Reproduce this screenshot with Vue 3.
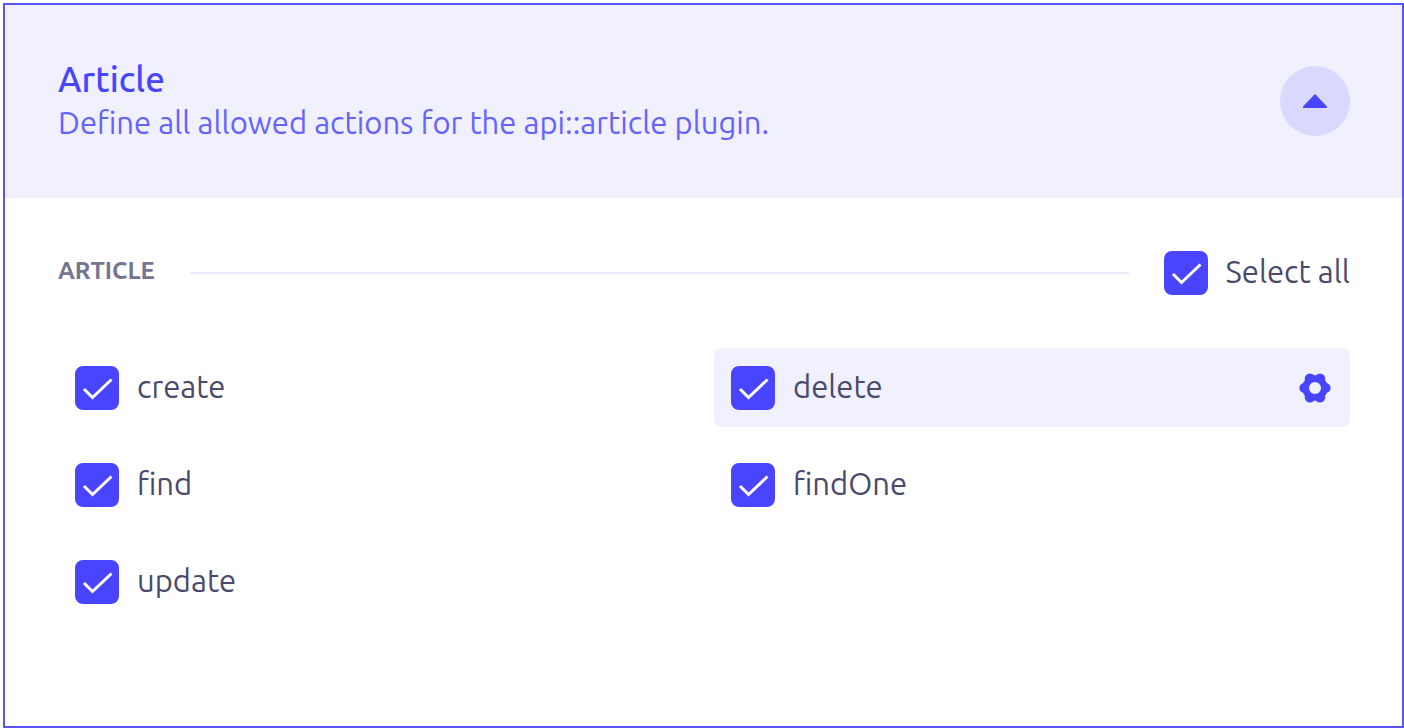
<script setup>
import { ref, computed } from 'vue'

const open = ref(true)
const actions = ref([
  { name: 'create', enabled: true },
  { name: 'delete', enabled: true },
  { name: 'find', enabled: true },
  { name: 'findOne', enabled: true },
  { name: 'update', enabled: true },
])
const active = ref('delete')

const allSelected = computed({
  get: () => actions.value.every((a) => a.enabled),
  set: (value) => actions.value.forEach((a) => (a.enabled = value)),
})
</script>

<template>
  <main class="page">
    <section class="accordion">
      <header class="head">
        <div class="titles">
          <h2 class="title">Article</h2>
          <p class="description">Define all allowed actions for the api::article plugin.</p>
        </div>
        <button class="toggle" type="button" aria-label="Toggle Article" :aria-expanded="open" @click="open = !open">
          <svg width="24" height="14" viewBox="0 0 24 14" aria-hidden="true">
            <path d="M12 0 24 12.500V14H0v-1.500z" fill="#4945ff" />
          </svg>
        </button>
      </header>

      <div v-if="open" class="body">
        <div class="group">
          <h3 class="group-name">ARTICLE</h3>
          <span class="rule"></span>
          <label class="choice">
            <span class="box">
              <input v-model="allSelected" type="checkbox" />
              <svg class="tick" viewBox="0 0 44 44" aria-hidden="true">
                <path d="M9 23 17.500 31.500 36.500 13.500" />
              </svg>
            </span>
            <span class="name">Select all</span>
          </label>
        </div>

        <div class="grid">
          <div v-for="action in actions" :key="action.name" class="cell" :class="{ active: action.name === active }">
            <label class="choice">
              <span class="box">
                <input v-model="action.enabled" type="checkbox" />
                <svg class="tick" viewBox="0 0 44 44" aria-hidden="true">
                  <path d="M9 23 17.500 31.500 36.500 13.500" />
                </svg>
              </span>
              <span class="name">{{ action.name }}</span>
            </label>
            <button v-if="action.name === active" class="settings" type="button" aria-label="Show bound route">
              <svg width="32" height="32" viewBox="0 0 32 32" aria-hidden="true">
                <g fill="#4945ff">
                  <circle cx="16" cy="16" r="12.800" />
                  <circle cx="5.400" cy="16" r="5" />
                  <circle cx="26.600" cy="16" r="5" />
                  <circle cx="11" cy="6.800" r="5.300" />
                  <circle cx="21" cy="6.800" r="5.300" />
                  <circle cx="11" cy="25.200" r="5.300" />
                  <circle cx="21" cy="25.200" r="5.300" />
                </g>
                <circle cx="16" cy="16" r="6" fill="#f0f0ff" />
              </svg>
            </button>
          </div>
        </div>
      </div>
    </section>
  </main>
</template>

<style>
body {
  margin: 0;
  background: #fff;
}
</style>

<style scoped>
.page {
  box-sizing: border-box;
  min-height: 100vh;
  padding: 3px 0 0 3px;
  display: flex;
  font-family: Ubuntu, "Noto Sans", "Open Sans", sans-serif;
  font-size: 31px;
  line-height: 44px;
  color: #4a4a6a;
}
.accordion {
  flex: 1;
  border: 2px solid #5a56f5;
}
.head {
  display: flex;
  align-items: center;
  justify-content: space-between;
  padding: 52px 52px 53px 53px;
  background: #f0f0ff;
}
.title,
.description {
  margin: 0;
  color: #4945ff;
  font-weight: 400;
}
.title {
  font-size: 35px;
  font-weight: 500;
}
.description {
  color: #6562ff;
}
.toggle {
  display: flex;
  align-items: center;
  justify-content: center;
  width: 70px;
  height: 70px;
  padding: 0;
  border: 0;
  border-radius: 50%;
  background: #d9d8ff;
}
.body {
  display: flex;
  flex-direction: column;
  gap: 53px;
  padding: 53px 52px 53px 53px;
}
.group {
  display: flex;
  align-items: center;
  gap: 35px;
}
.group-name {
  margin: 0;
  padding-bottom: 4px;
  font-size: 24px;
  line-height: 32px;
  font-weight: 600;
  color: #757592;
}
.rule {
  flex: 1;
  height: 2px;
  background: #eaeafa;
}
.choice {
  display: flex;
  align-items: center;
  gap: 18px;
}
.box {
  display: grid;
  width: 44px;
  height: 44px;
}
.box input,
.tick {
  grid-area: 1 / 1;
  width: 44px;
  height: 44px;
}
.box input {
  appearance: none;
  margin: 0;
  border: 2px solid #c0c0cf;
  border-radius: 8px;
  background: #fff;
}
.box input:checked {
  border-color: #4945ff;
  background: #4945ff;
}
.tick {
  fill: none;
  stroke: #fff;
  stroke-width: 3;
  pointer-events: none;
}
.name {
  line-height: 42px;
  padding-bottom: 2px;
}
.grid {
  display: grid;
  grid-template-columns: 1fr 1fr;
  gap: 18px 20px;
}
.cell {
  display: flex;
  align-items: center;
  justify-content: space-between;
  padding: 18px 19px 17px 17px;
  border-radius: 8px;
}
.active {
  background: #f0f0ff;
}
.settings {
  display: flex;
  padding: 0;
  border: 0;
  background: none;
}
</style>
